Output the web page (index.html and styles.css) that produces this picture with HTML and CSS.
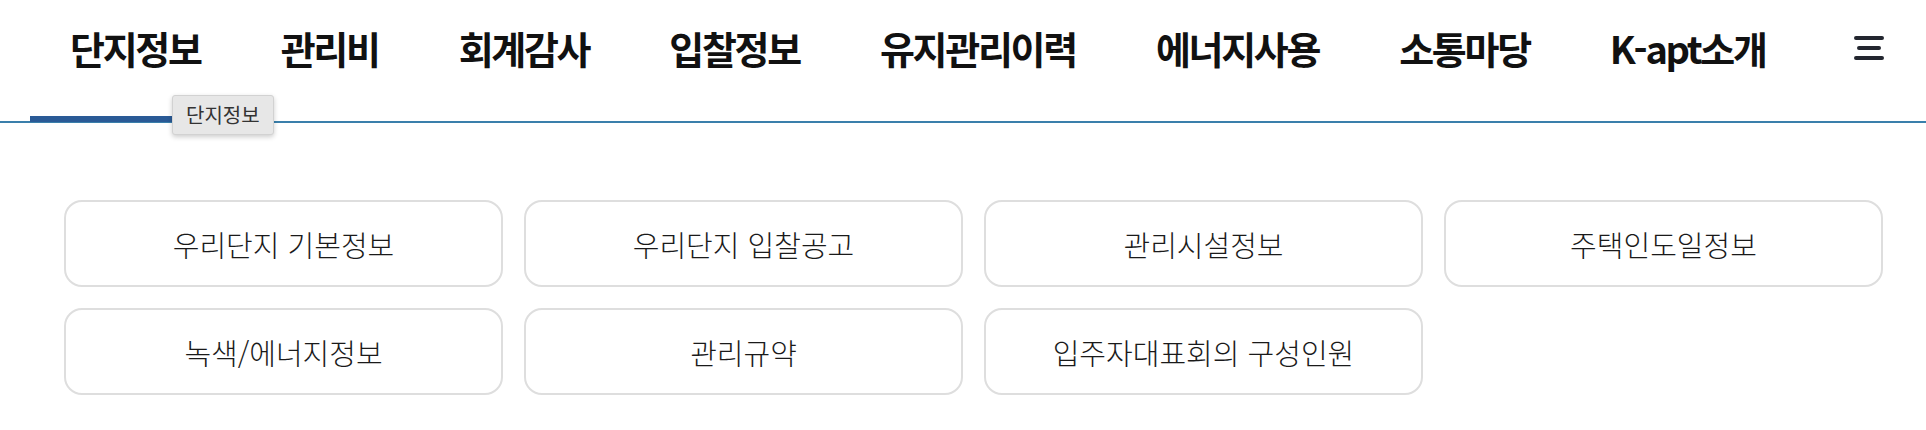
FILE: index.html
```html
<!DOCTYPE html>
<html lang="ko">
<head>
  <meta charset="UTF-8">
  <title>단지정보 | K-apt</title>
  <meta name="viewport" content="width=device-width, initial-scale=1.0">
  <link rel="stylesheet" href="styles.css">
</head>
<body>
  <header class="gnb">
    <ul class="gnb-menu">
      <li class="on"><a href="#">단지정보</a></li>
      <li><a href="#">관리비</a></li>
      <li><a href="#">회계감사</a></li>
      <li><a href="#">입찰정보</a></li>
      <li><a href="#">유지관리이력</a></li>
      <li><a href="#">에너지사용</a></li>
      <li><a href="#">소통마당</a></li>
      <li><a href="#">K-apt소개</a></li>
    </ul>
    <button class="gnb-all" type="button" aria-label="전체메뉴">
      <svg width="32" height="28" viewBox="0 0 32 28">
        <path d="M3 4H29M6 14H26M3 24H29" stroke="#23262f" stroke-width="4" stroke-linecap="round" fill="none"/>
      </svg>
    </button>
    <div class="tooltip">단지정보</div>
  </header>

  <div class="container">
    <ul class="quick-list">
      <li><a href="#">우리단지 기본정보</a></li>
      <li><a href="#">우리단지 입찰공고</a></li>
      <li><a href="#">관리시설정보</a></li>
      <li><a href="#">주택인도일정보</a></li>
      <li><a href="#">녹색/에너지정보</a></li>
      <li><a href="#">관리규약</a></li>
      <li><a href="#">입주자대표회의 구성인원</a></li>
    </ul>
  </div>
</body>
</html>
```

FILE: styles.css
```css
body {
  margin: 0;
  background-color: #fff;
  color: #222;
  font-family: "Noto Sans CJK KR", "Noto Sans", sans-serif;
}

ul {
  list-style: none;
  margin: 0;
  padding: 0;
}

a {
  color: inherit;
  text-decoration: none;
}

.gnb {
  position: relative;
  display: flex;
  align-items: center;
  height: 121px;
  padding: 0 41px 0 30px;
  border-bottom: 2px solid #3a7fab;
}

.gnb-menu {
  display: flex;
  height: 100%;
}

.gnb-menu li {
  position: relative;
  display: flex;
  align-items: center;
  padding: 0 40px 26px;
}

.gnb-menu a {
  font-size: 38px;
  font-weight: bold;
  letter-spacing: -2.3px;
  color: #111;
}

.gnb-menu li.on::after {
  content: "";
  position: absolute;
  left: 0;
  right: 0;
  bottom: -1px;
  height: 6px;
  background-color: #2a5a96;
}

.gnb-all {
  margin-left: auto;
  margin-bottom: 26px;
  padding: 0;
  border: none;
  background: none;
  cursor: pointer;
  display: flex;
}

.tooltip {
  position: absolute;
  left: 172px;
  top: 95px;
  padding: 7px 13px 8px;
  background-color: #e7e7e7;
  border: 1px solid #d2d2d2;
  border-radius: 3px;
  box-shadow: 0 2px 5px rgba(0, 0, 0, 0.2);
  font-size: 20px;
  line-height: 23px;
  color: #333;
}

.container {
  padding: 77px 43px 0 64px;
}

.quick-list {
  display: grid;
  grid-template-columns: repeat(4, 1fr);
  gap: 21px;
}

.quick-list a {
  display: flex;
  align-items: center;
  justify-content: center;
  height: 83px;
  border: 2px solid #dedede;
  border-radius: 18px;
  font-size: 29px;
  font-weight: 300;
  color: #1a1a1a;
}
```
